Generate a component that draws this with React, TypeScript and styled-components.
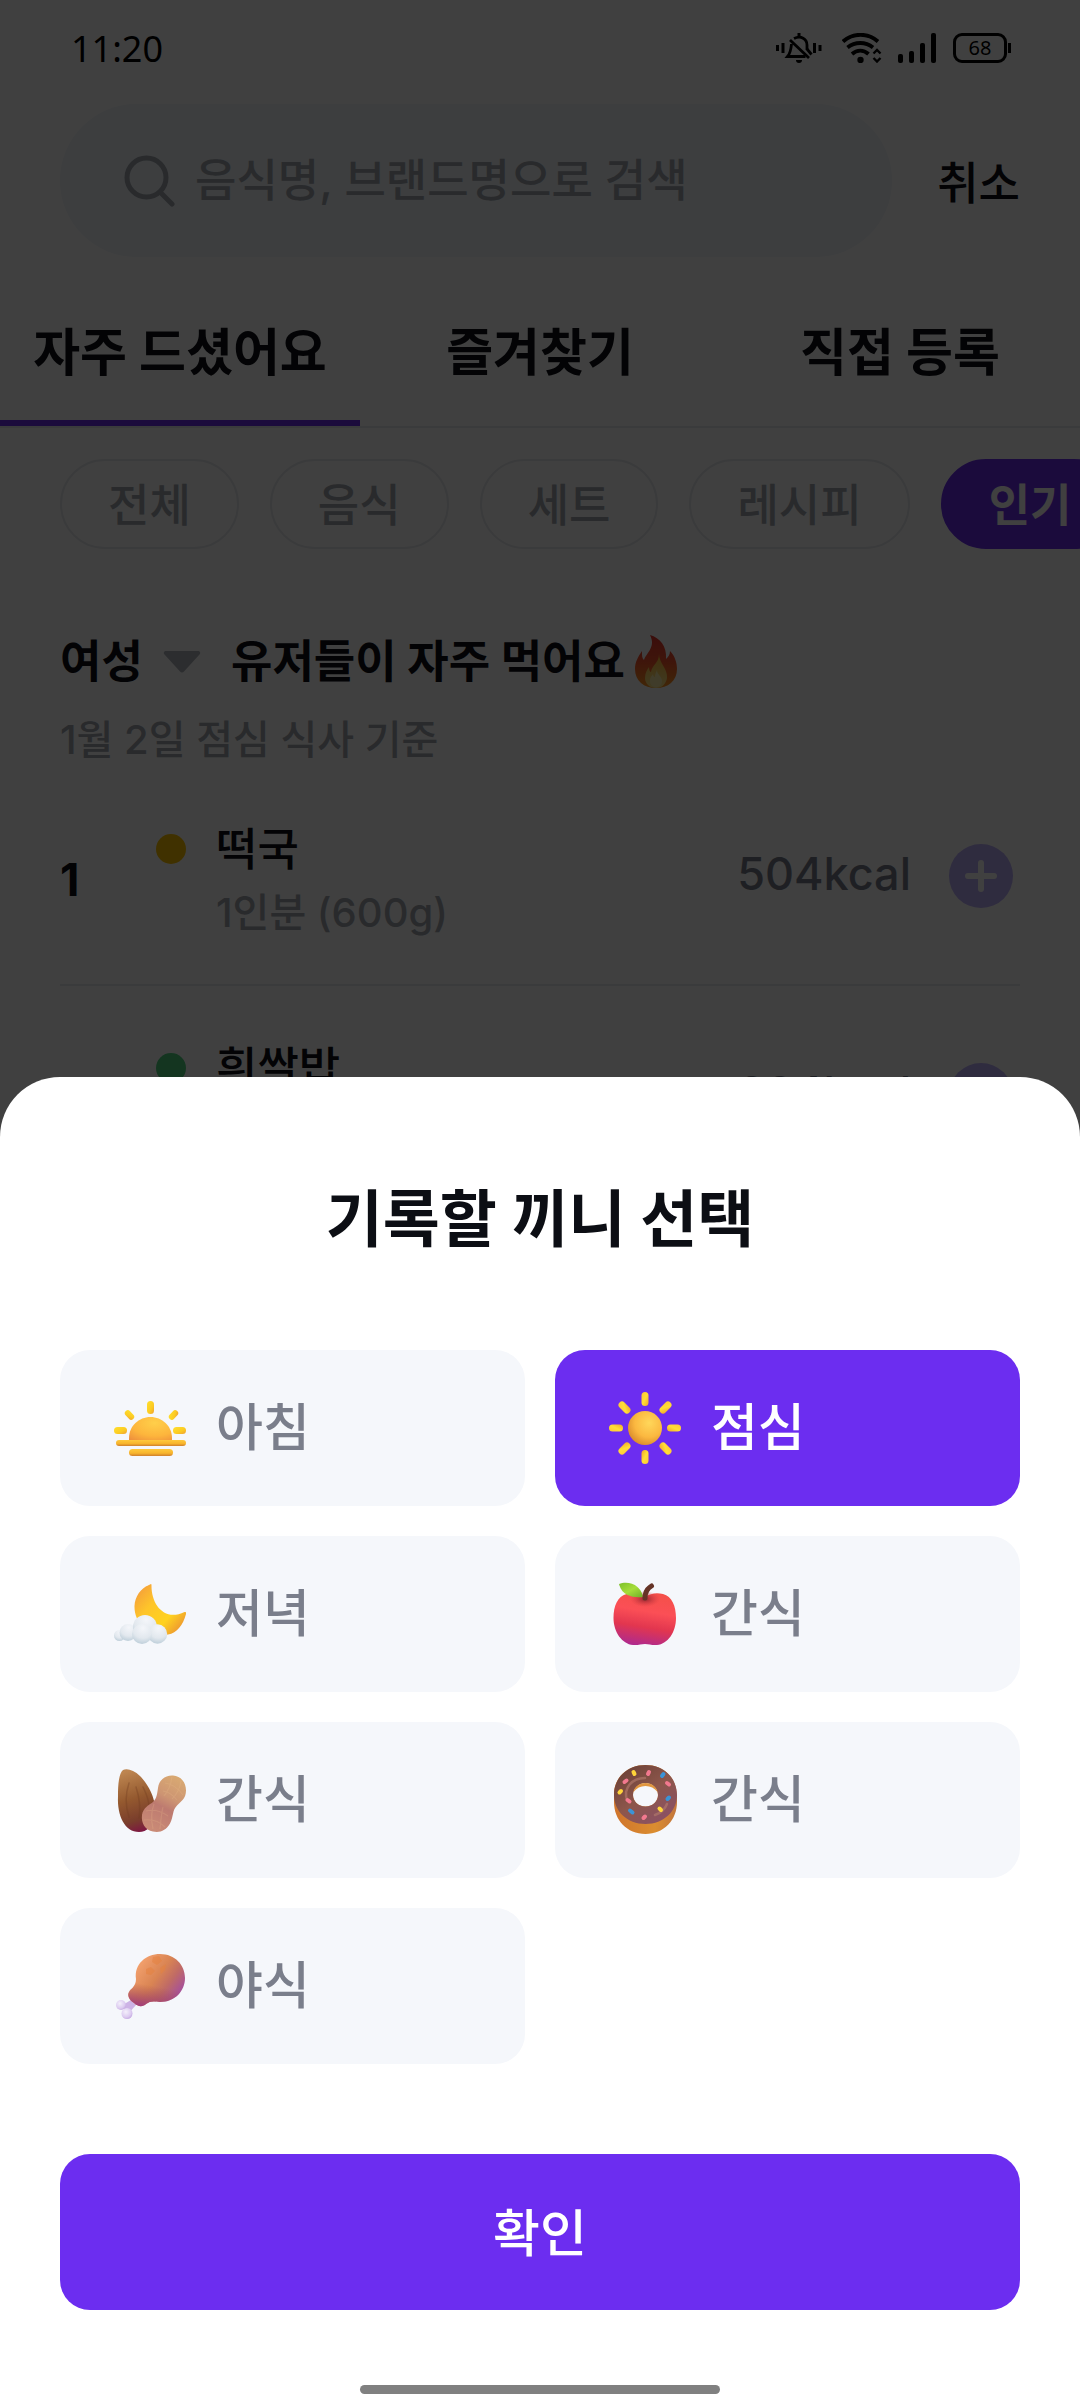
import React, { useState } from "react";
import styled, { createGlobalStyle, css } from "styled-components";

const color = {
  purple: "#6c2df0",
  lilac: "#bcaefa",
  ink: "#0c0e14",
  gray: "#7a7e8b",
  placeholder: "#a2a8b0",
  line: "#e8e9ed",
  surface: "#f5f7fb",
  field: "#f1f6fb",
};

const GlobalStyle = createGlobalStyle`
  *, *::before, *::after { box-sizing: border-box; }
  body { margin: 0; background: #fff; }
  body, button, input, select {
    font-family: Inter, "Noto Sans CJK KR", "Noto Sans", sans-serif;
    color: ${color.ink};
  }
  button { border: 0; background: none; padding: 0; cursor: pointer; }
`;

const Screen = styled.div`
  height: 100vh;
  overflow: hidden;
  background: #fff;
`;

const StatusBar = styled.header`
  display: flex;
  align-items: center;
  justify-content: space-between;
  height: 96px;
  padding: 0 69px 0 71px;
`;

const Clock = styled.time`
  font-family: "Noto Sans", sans-serif;
  font-size: 36px;
  color: #000;
`;

const StatusIcons = styled.div`
  display: flex;
  align-items: center;
  gap: 16px;
`;

const SearchRow = styled.div`
  display: flex;
  align-items: center;
  gap: 45px;
  padding: 8px 60px 0;
`;

const SearchField = styled.label`
  flex: 1;
  min-width: 0;
  display: flex;
  align-items: center;
  gap: 19px;
  height: 153px;
  padding: 0 64px;
  border-radius: 90px;
  background: ${color.field};
`;

const SearchInput = styled.input`
  flex: 1;
  min-width: 0;
  height: 66px;
  padding: 0;
  border: 0;
  outline: 0;
  background: none;
  font-size: 45px;
  font-weight: 500;
  &::placeholder { color: ${color.placeholder}; opacity: 1; }
`;

const CancelButton = styled.button`
  padding-top: 6px;
  font-size: 45px;
  font-weight: 500;
  line-height: 66px;
`;

const Tabs = styled.nav`
  display: grid;
  grid-template-columns: repeat(3, 1fr);
  margin-top: 21px;
  border-bottom: 2px solid ${color.line};
`;

const Tab = styled.button<{ $active?: boolean }>`
  height: 148px;
  border-bottom: 6px solid ${(p) => (p.$active ? color.purple : "transparent")};
  font-size: 51px;
  font-weight: 700;
`;

const Chips = styled.div`
  display: flex;
  gap: 31px;
  padding: 31px 0 0 60px;
  overflow: hidden;
`;

const Chip = styled.button<{ $active?: boolean }>`
  flex: none;
  height: 90px;
  padding: 0 46px 4px;
  border: 2px solid ${color.line};
  border-radius: 45px;
  font-size: 45px;
  font-weight: 500;
  color: ${color.placeholder};
  ${(p) =>
    p.$active &&
    css`
      border-color: ${color.purple};
      background: ${color.purple};
      color: #fff;
      font-weight: 700;
    `}
`;

const Ranking = styled.main`
  padding: 80px 60px 0;
`;

const Heading = styled.div`
  display: flex;
  align-items: center;
  gap: 30px;
  height: 66px;
`;

const GenderField = styled.label`
  display: flex;
  align-items: center;
  gap: 20px;
`;

const GenderSelect = styled.select`
  appearance: none;
  padding: 0;
  border: 0;
  background: none;
  font-size: 45px;
  font-weight: 700;
  line-height: 66px;
`;

const HeadingText = styled.h1`
  display: flex;
  align-items: center;
  gap: 9px;
  margin: 0;
  font-size: 45px;
  font-weight: 700;
  line-height: 66px;
`;

const Basis = styled.p`
  margin: 18px 0 0;
  font-size: 40px;
  font-weight: 500;
  line-height: 54px;
  color: ${color.placeholder};
`;

const FoodList = styled.ol`
  list-style: none;
  margin: 0;
  padding: 0;
`;

const FoodRow = styled.li`
  display: flex;
  align-items: center;
  height: 219px;
  padding-right: 7px;
  border-bottom: 2px solid ${color.line};
`;

const Rank = styled.span`
  width: 96px;
  padding-top: 8px;
  font-size: 45px;
  font-weight: 700;
`;

const Dot = styled.span<{ $tone: string }>`
  align-self: flex-start;
  width: 30px;
  height: 30px;
  margin: 67px 30px 0 0;
  border-radius: 50%;
  background: ${(p) => p.$tone};
`;

const Food = styled.div`
  flex: 1;
  padding-top: 8px;
  font-size: 45px;
  font-weight: 500;
  line-height: 66px;
`;

const Portion = styled.div`
  font-size: 40px;
  line-height: 60px;
  color: ${color.placeholder};
`;

const Calories = styled.span`
  margin-right: 38px;
  padding-bottom: 4px;
  font-size: 45px;
  font-weight: 500;
  color: ${color.gray};
`;

const AddButton = styled.button`
  display: grid;
  place-items: center;
  width: 64px;
  height: 64px;
  border-radius: 50%;
  background: ${color.lilac};
`;

const Backdrop = styled.div`
  position: fixed;
  inset: 0;
  background: rgba(0, 0, 0, 0.75);
`;

const Sheet = styled.form`
  position: fixed;
  inset: auto 0 0;
  display: flex;
  flex-direction: column;
  padding: 107px 60px 6px;
  border-radius: 60px 60px 0 0;
  background: #fff;
`;

const SheetTitle = styled.h2`
  margin: 0 0 94px;
  font-size: 62px;
  font-weight: 700;
  line-height: 72px;
  text-align: center;
`;

const MealGrid = styled.div`
  display: grid;
  grid-template-columns: 1fr 1fr;
  gap: 30px;
`;

const MealCard = styled.label<{ $selected: boolean }>`
  position: relative;
  display: flex;
  align-items: center;
  gap: 30px;
  height: 156px;
  padding: 0 54px;
  border-radius: 30px;
  color: ${(p) => (p.$selected ? "#fff" : color.gray)};
  background: ${(p) => (p.$selected ? color.purple : color.surface)};
  cursor: pointer;
`;

const MealName = styled.span`
  padding-bottom: 8px;
  font-size: 51px;
  font-weight: 500;
`;

const MealRadio = styled.input`
  position: absolute;
  inset: 0;
  margin: 0;
  opacity: 0;
`;

const ConfirmButton = styled.button`
  height: 156px;
  margin-top: 90px;
  padding-bottom: 4px;
  border-radius: 30px;
  background: ${color.purple};
  color: #fff;
  font-size: 51px;
  font-weight: 500;
`;

const HomeIndicator = styled.div`
  align-self: center;
  width: 360px;
  max-width: 50%;
  height: 9px;
  margin-top: 75px;
  border-radius: 5px;
  background: #808080;
`;

/* ---------- status icons ---------- */

const SilentIcon = () => (
  <svg width="50" height="30" viewBox="0 0 50 30" aria-hidden="true">
    <path d="M1.500 12v6M7 10v10M38.500 10v10M44 12v6" stroke="#000" strokeWidth="3" />
    <path d="M21.500 0h3v4h-3z" />
    <path d="M18 5.500C25 2 31 6 31 12v5M15.500 11c-.5 6-1 9-4 12.500h18" fill="none" stroke="#000" strokeWidth="2.800" />
    <path d="M31 16l4.500 5.500" stroke="#000" strokeWidth="2.800" />
    <path d="M14 7l19 18" stroke="#000" strokeWidth="2.800" />
    <path d="M20 27h6a3 3 0 0 1-6 0z" />
  </svg>
);

const WifiIcon = () => (
  <svg width="40" height="30" viewBox="0 0 40 30" aria-hidden="true">
    <g fill="none" stroke="#000" strokeWidth="3.800">
      <path d="M1 8.500C11-.5 26-.5 36 8.500" />
      <path d="M5.500 14.500c7.500-6 18-6 25.500 0" />
      <path d="M10 21c5-4.500 11.500-4.500 16.500 0" />
      <path d="M31.500 20.500L35 17l3.500 3.500M31.500 25L35 28.500 38.500 25" strokeWidth="2.400" />
    </g>
    <circle cx="18.500" cy="27" r="3.200" />
  </svg>
);

const SignalIcon = () => (
  <svg width="39" height="30" viewBox="0 0 39 30" aria-hidden="true">
    <rect x="0" y="21" width="5" height="9" rx="2" />
    <rect x="11" y="18" width="5" height="12" rx="2" />
    <rect x="22" y="10" width="5" height="20" rx="2" />
    <rect x="33" y="0" width="5" height="30" rx="2" />
  </svg>
);

const Battery = styled.span`
  position: relative;
  display: grid;
  place-items: center;
  width: 54px;
  height: 30px;
  margin-right: 4px;
  border: 3px solid #000;
  border-radius: 9px;
  font-family: "Noto Sans", sans-serif;
  font-size: 20px;
  font-weight: 400;
  line-height: 24px;
  color: #000;
  &::after {
    content: "";
    position: absolute;
    left: 52px;
    top: 7px;
    width: 3px;
    height: 10px;
    background: #000;
  }
`;

/* ---------- page icons ---------- */

const SearchIcon = () => (
  <svg width="52" height="52" viewBox="0 0 52 52" fill="none" stroke={color.placeholder} strokeWidth="5" strokeLinecap="round" aria-hidden="true">
    <circle cx="22.500" cy="22.500" r="19.500" />
    <path d="M36.500 37.500L48 49" />
  </svg>
);

const CaretIcon = () => (
  <svg width="38" height="22" viewBox="0 0 38 22" fill="#b0b5bc" aria-hidden="true">
    <path d="M3 0h32c2 0 3 2 1.500 3.600L21 20.500c-1 1.200-3 1.200-4 0L1.500 3.600C0 2 1 0 3 0z" />
  </svg>
);

const PlusIcon = () => (
  <svg width="32" height="32" viewBox="0 0 32 32" stroke="#fff" strokeWidth="6" strokeLinecap="round" aria-hidden="true">
    <path d="M16 3v26M3 16h26" />
  </svg>
);

const FlameIcon = () => (
  <svg width="44" height="54" viewBox="0 0 44 54" aria-hidden="true">
    <defs>
      <linearGradient id="flameOuter" x1="0" y1="0" x2="0" y2="1">
        <stop offset="0" stopColor="#e8352c" />
        <stop offset=".5" stopColor="#f8552c" />
        <stop offset="1" stopColor="#ff9a1e" />
      </linearGradient>
      <linearGradient id="flameInner" x1="0" y1="0" x2="0" y2="1">
        <stop offset="0" stopColor="#ffb52e" />
        <stop offset="1" stopColor="#ffe98a" />
      </linearGradient>
    </defs>
    <path d="M16 0c10 3 17 11 16 24 2-2 4-4 4-8 5 5 7 12 7 18 0 12-9 19-21 19S1 46 1 34c0-7 3-12 7-18 0 5 0 7 2 9C13 17 22 12 16 0z" fill="url(#flameOuter)" />
    <path d="M25 19c0 9 9 15 8 24-1 6-5 10-11 10s-11-4-11-10c0-5 2-8 4-11 0 3 1 5 2 5 1-7 8-9 8-18z" fill="url(#flameInner)" />
    <path d="M23 35c0 5 5 6 5 11 0 4-3 6-6 6s-6-2-6-6 2-5 3-7c0 2 1 3 2 3 0-3 1-4 2-7z" fill="#fff0a8" />
  </svg>
);

/* ---------- meal icons, all on a 72 unit board ---------- */

const MealSvg = styled.svg.attrs({ viewBox: "0 0 72 72", "aria-hidden": true })`
  flex: none;
  width: 72px;
  height: 72px;
`;

const SunriseIcon = () => (
  <MealSvg>
    <defs>
      <radialGradient id="dome" cx=".6" cy=".25" r=".9">
        <stop offset="0" stopColor="#ffcf4a" />
        <stop offset=".6" stopColor="#fdb53c" />
        <stop offset="1" stopColor="#ee8f3c" />
      </radialGradient>
      <linearGradient id="bar" x1="0" y1="0" x2="0" y2="1">
        <stop offset="0" stopColor="#ffc93c" />
        <stop offset=".6" stopColor="#f7b42c" />
        <stop offset="1" stopColor="#cf7f2c" />
      </linearGradient>
      <linearGradient id="ray" x1="0" y1="0" x2="1" y2="1">
        <stop offset="0" stopColor="#ffe02e" />
        <stop offset=".6" stopColor="#fccb22" />
        <stop offset="1" stopColor="#ee9f33" />
      </linearGradient>
    </defs>
    <rect x="33" y="9" width="7" height="13" rx="3.500" fill="url(#ray)" />
    <rect x="0" y="35" width="13" height="7" rx="3.500" fill="url(#ray)" />
    <rect x="59" y="35" width="13" height="7" rx="3.500" fill="url(#ray)" />
    <rect x="10" y="20" width="11" height="6" rx="3" transform="rotate(48 15.500 23)" fill="url(#ray)" />
    <rect x="54" y="20" width="11" height="6" rx="3" transform="rotate(-48 59.500 23)" fill="url(#ray)" />
    <path d="M15 49v-3C15 34 25 25 36.500 25S58 34 58 46v3z" fill="url(#dome)" />
    <rect x="2" y="48" width="70" height="6" rx="3" fill="url(#bar)" />
    <rect x="15" y="57" width="44" height="7" rx="3.500" fill="url(#bar)" />
  </MealSvg>
);

const SunIcon = () => (
  <MealSvg>
    <defs>
      <radialGradient id="disc" cx=".62" cy=".35" r=".7">
        <stop offset="0" stopColor="#ffd75a" />
        <stop offset=".6" stopColor="#fbb840" />
        <stop offset="1" stopColor="#d98a2c" />
      </radialGradient>
      <linearGradient id="beam" x1="0" y1="0" x2="1" y2="1">
        <stop offset="0" stopColor="#ffc53a" />
        <stop offset=".5" stopColor="#ffdf35" />
        <stop offset="1" stopColor="#f0a42c" />
      </linearGradient>
    </defs>
    {[0, 45, 90, 135, 180, 225, 270, 315].map((angle) => (
      <rect key={angle} x="32.500" y="0" width="7" height="14" rx="3.500" transform={`rotate(${angle} 36 36)`} fill="url(#beam)" />
    ))}
    <circle cx="36" cy="36" r="17" fill="url(#disc)" />
  </MealSvg>
);

const MoonIcon = () => (
  <MealSvg>
    <defs>
      <linearGradient id="moon" x1="0" y1=".2" x2=".8" y2=".9">
        <stop offset="0" stopColor="#f5a13a" />
        <stop offset=".35" stopColor="#fec52a" />
        <stop offset=".75" stopColor="#ffd21e" />
        <stop offset="1" stopColor="#f0a22e" />
      </linearGradient>
      <radialGradient id="cloud" cx=".55" cy=".2" r=".85">
        <stop offset="0" stopColor="#f4f6fa" />
        <stop offset=".6" stopColor="#e2e8ee" />
        <stop offset="1" stopColor="#b9cbd7" />
      </radialGradient>
    </defs>
    <path d="M36 6.500c1-1 1.500-.5 1.500.5C37 26 50 44 70.500 34c1.500 0 2 .5 1.500 2C69 47 63 55 54 56.500 36 60 20 46 20.500 28 21 18 27 10 36 6.500z" fill="url(#moon)" />
    <circle cx="5.500" cy="57.500" r="5.500" fill="url(#cloud)" />
    <circle cx="14" cy="54.500" r="8.500" fill="url(#cloud)" />
    <circle cx="31" cy="49" r="12" fill="url(#cloud)" />
    <circle cx="43.500" cy="56" r="9.700" fill="url(#cloud)" />
    <circle cx="28" cy="56" r="10" fill="url(#cloud)" />
  </MealSvg>
);

const AppleIcon = () => (
  <MealSvg>
    <defs>
      <linearGradient id="apple" x1=".6" y1="0" x2=".4" y2="1">
        <stop offset="0" stopColor="#f4504a" />
        <stop offset=".35" stopColor="#fb4f56" />
        <stop offset=".65" stopColor="#e2364f" />
        <stop offset="1" stopColor="#b02a8c" />
      </linearGradient>
      <radialGradient id="dimple" cx=".5" cy=".5" r=".5">
        <stop offset="0" stopColor="#8e2430" />
        <stop offset="1" stopColor="#d43a42" stopOpacity="0" />
      </radialGradient>
      <linearGradient id="leaf" x1="0" y1="0" x2="1" y2="1">
        <stop offset="0" stopColor="#7cc02a" />
        <stop offset=".5" stopColor="#a6dd3a" />
        <stop offset="1" stopColor="#6fae28" />
      </linearGradient>
    </defs>
    <path d="M36 19c6-4 12-4.500 18-3 9 2.500 13 12 13 24 0 14-8 26-19 27-5 .5-8-1-12-1s-7 1.500-12 1C13 66 4.500 54 4.500 40c0-12 4-21.500 13-24 6-1.500 12.500-1 18.500 3z" fill="url(#apple)" />
    <ellipse cx="36" cy="21" rx="15" ry="8" fill="url(#dimple)" />
    <path d="M10 6c8-3 21-1 24 13-10 1-21-1-24-13z" fill="url(#leaf)" />
    <path d="M36 20c0-5 2.500-9.500 6.500-12" fill="none" stroke="#653326" strokeWidth="5" strokeLinecap="round" />
  </MealSvg>
);

const NutsIcon = () => (
  <MealSvg>
    <defs>
      <linearGradient id="almond" x1=".4" y1="0" x2=".6" y2="1">
        <stop offset="0" stopColor="#bd8550" />
        <stop offset=".45" stopColor="#94592f" />
        <stop offset=".8" stopColor="#793d2c" />
        <stop offset="1" stopColor="#7d1742" />
      </linearGradient>
      <linearGradient id="peanut" x1=".8" y1="0" x2=".4" y2="1">
        <stop offset="0" stopColor="#d9aa72" />
        <stop offset=".4" stopColor="#cd9573" />
        <stop offset=".6" stopColor="#bd7a70" />
        <stop offset="1" stopColor="#c98a76" />
      </linearGradient>
    </defs>
    <path d="M9 6c4-2 11 0 17 6 9 9 17 25 15 38-2 12-8 18-16 18C11 68 3 52 4 32 4 20 5 9 9 6z" fill="url(#almond)" />
    <path d="M15 19c-3 9-4 22 0 34M22 23c3 9 5 19 3 31M29 23c3 6 6 13 6 20" fill="none" stroke="#713b20" strokeOpacity=".35" strokeWidth="1.500" strokeLinecap="round" />
    <path d="M44 24c1-8 7-13 15-12.500 8 .5 13 7 13 15 0 8-5 11-9 15-5 5-3 10-7 18-4 7-10 9.500-17 8C31 66 27 59 28 51c1-7 7-10 11-13 4-4 4-8 5-14z" fill="url(#peanut)" />
    <path d="M51 19c7 1 13 5 18 12M49 27c6 1 10 4 14 9M58 13c-1 7-3 13-8 19M67 17c-1 8-4 13-9 18M32 47c8-2 15 0 22 5M30 56c8-1 15 1 21 7M40 40c-3 8-3 16-1 25M49 43c-2 8-2 14-3 22" fill="none" stroke="#f0c193" strokeOpacity=".2" strokeWidth="1.200" />
  </MealSvg>
);

const DonutIcon = () => (
  <MealSvg>
    <defs>
      <linearGradient id="dough" x1="0" y1="0" x2="1" y2="0">
        <stop offset="0" stopColor="#cf742c" />
        <stop offset=".65" stopColor="#db8d30" />
        <stop offset="1" stopColor="#c2753c" />
      </linearGradient>
      <linearGradient id="glaze" x1=".1" y1=".1" x2=".8" y2="1">
        <stop offset="0" stopColor="#6d4238" />
        <stop offset=".5" stopColor="#8d564b" />
        <stop offset="1" stopColor="#8a5066" />
      </linearGradient>
    </defs>
    <path fillRule="evenodd" d="M5 30C5 14 18 1 36.500 1S68 14 68 32v6c0 18-13 32-31.500 32S5 56 5 38zM24 31c0 6 5 11.500 12.500 11.500S49 37 49 31s-5-12-12.500-12S24 25 24 31z" fill="url(#dough)" />
    <path fillRule="evenodd" d="M5 31C5 14 18 1 36.500 1S68 14 68 31c0 16-13 29-31.500 29S5 47 5 31zM24 31c0 6 5 11.500 12.500 11.500S49 37 49 31s-5-12-12.500-12S24 25 24 31z" fill="url(#glaze)" />
    <path d="M24.500 28c1-5 5.500-9 12-9s11 4 12 9c-3-4-7-6-12-6s-9 2-12 6z" fill="#e0963f" />
    <path d="M18 36c-4-12 5-22 18-22M46 51c6-2 10-6 12-11" fill="none" stroke="#b2796c" strokeOpacity=".65" strokeWidth="2.500" strokeLinecap="round" />
    <g strokeWidth="4" strokeLinecap="round">
      <path d="M24.500 8l1 2M10.500 28.500l1.500-1.500M50.500 44.500l1.500 1.500" stroke="#ffd43a" />
      <path d="M39 10l1-2M15.500 18l2-1.500M58 19l2 1.500M18.500 36l2 1.500M34.500 54l1.500-1.500" stroke="#f2798f" />
      <path d="M53 12l1.500-2M21 46.500l2.500 2M58.500 35l1.500-1.500" stroke="#3b93d6" />
    </g>
  </MealSvg>
);

const DrumstickIcon = () => (
  <MealSvg>
    <defs>
      <linearGradient id="meat" x1=".15" y1=".1" x2=".95" y2=".65">
        <stop offset="0" stopColor="#f7a571" />
        <stop offset=".5" stopColor="#d98453" />
        <stop offset=".75" stopColor="#c06b65" />
        <stop offset="1" stopColor="#a85296" />
      </linearGradient>
      <linearGradient id="shank" x1=".5" y1="0" x2=".3" y2="1">
        <stop offset=".6" stopColor="#a3484c" stopOpacity="0" />
        <stop offset="1" stopColor="#a3407a" />
      </linearGradient>
      <radialGradient id="bone" cx=".4" cy=".35" r=".8">
        <stop offset="0" stopColor="#f4effb" />
        <stop offset=".6" stopColor="#dccbf0" />
        <stop offset="1" stopColor="#b894d8" />
      </radialGradient>
    </defs>
    <path d="M7 56l10-6 5 5-8 9z" fill="#cdb3e6" />
    <circle cx="7" cy="55" r="5" fill="url(#bone)" />
    <circle cx="13" cy="63.500" r="5.500" fill="url(#bone)" />
    <path d="M22 29C20 14 32 4 46 4c15 0 25 11 25 24S61 52 46 52c-7-1-10-1-14 2-3 3-8 3-12-1-5-3-7-8-5-11 1-3 7-5 7-13z" fill="url(#meat)" />
    <path d="M22 29C20 14 32 4 46 4c15 0 25 11 25 24S61 52 46 52c-7-1-10-1-14 2-3 3-8 3-12-1-5-3-7-8-5-11 1-3 7-5 7-13z" fill="url(#shank)" />
    <path d="M39 7l6-1 3 5-5 4-5-3zM32 19l5-2 4 4-4 4-5-1zM46 18l6-4-1 6-4 4z" fill="#e3813f" fillOpacity=".55" />
  </MealSvg>
);

const chips = ["전체", "음식", "세트", "레시피", "인기"];

const foods = [
  { name: "떡국", portion: "1인분 (600g)", kcal: 504, tone: "#ffc400" },
  { name: "흰쌀밥", portion: "1공기 (210g)", kcal: 334, tone: "#4fd47f" },
];

const meals = [
  { id: "breakfast", label: "아침", Icon: SunriseIcon },
  { id: "lunch", label: "점심", Icon: SunIcon },
  { id: "dinner", label: "저녁", Icon: MoonIcon },
  { id: "snack-morning", label: "간식", Icon: AppleIcon },
  { id: "snack-afternoon", label: "간식", Icon: NutsIcon },
  { id: "snack-evening", label: "간식", Icon: DonutIcon },
  { id: "late-night", label: "야식", Icon: DrumstickIcon },
];

export default function App() {
  const [meal, setMeal] = useState("lunch");

  return (
    <>
      <GlobalStyle />
      <Screen>
        <StatusBar>
          <Clock>11:20</Clock>
          <StatusIcons>
            <SilentIcon />
            <WifiIcon />
            <SignalIcon />
            <Battery>68</Battery>
          </StatusIcons>
        </StatusBar>
        <SearchRow>
          <SearchField>
            <SearchIcon />
            <SearchInput type="search" aria-label="검색" placeholder="음식명, 브랜드명으로 검색" />
          </SearchField>
          <CancelButton type="button">취소</CancelButton>
        </SearchRow>
        <Tabs>
          <Tab type="button" $active>자주 드셨어요</Tab>
          <Tab type="button">즐겨찾기</Tab>
          <Tab type="button">직접 등록</Tab>
        </Tabs>
        <Chips>
          {chips.map((chip) => (
            <Chip key={chip} type="button" $active={chip === "인기"}>{chip}</Chip>
          ))}
        </Chips>
        <Ranking>
          <Heading>
            <GenderField>
              <GenderSelect aria-label="성별" defaultValue="여성">
                <option>여성</option>
                <option>남성</option>
              </GenderSelect>
              <CaretIcon />
            </GenderField>
            <HeadingText>
              유저들이 자주 먹어요
              <FlameIcon />
            </HeadingText>
          </Heading>
          <Basis>1월 2일 점심 식사 기준</Basis>
          <FoodList>
            {foods.map((food, i) => (
              <FoodRow key={food.name}>
                <Rank>{i + 1}</Rank>
                <Dot $tone={food.tone} />
                <Food>
                  {food.name}
                  <Portion>{food.portion}</Portion>
                </Food>
                <Calories>{food.kcal}kcal</Calories>
                <AddButton type="button" aria-label={`${food.name} 추가`}>
                  <PlusIcon />
                </AddButton>
              </FoodRow>
            ))}
          </FoodList>
        </Ranking>
      </Screen>
      <Backdrop />
      <Sheet role="dialog" aria-labelledby="sheet-title" onSubmit={(e) => e.preventDefault()}>
        <SheetTitle id="sheet-title">기록할 끼니 선택</SheetTitle>
        <MealGrid>
          {meals.map(({ id, label, Icon }) => (
            <MealCard key={id} $selected={meal === id}>
              <MealRadio type="radio" name="meal" value={id} checked={meal === id} onChange={() => setMeal(id)} />
              <Icon />
              <MealName>{label}</MealName>
            </MealCard>
          ))}
        </MealGrid>
        <ConfirmButton type="submit">확인</ConfirmButton>
        <HomeIndicator />
      </Sheet>
    </>
  );
}
